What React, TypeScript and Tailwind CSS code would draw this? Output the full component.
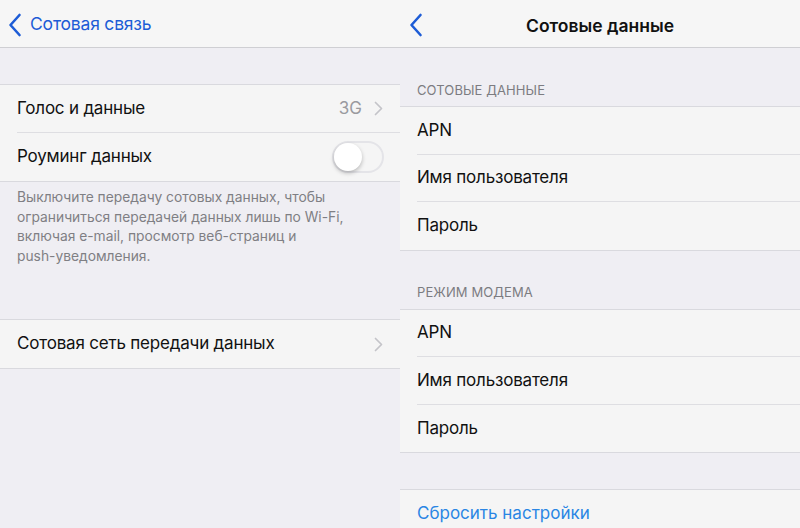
const font = { fontFamily: 'Inter, "Noto Sans", sans-serif' };

function BackChevron() {
  return (
    <svg width="14" height="24" viewBox="0 0 14 24" className="shrink-0">
      <path d="M11.5 2 L2.5 12 L11.5 22" fill="none" stroke="#1d5cd6" strokeWidth="2.6" strokeLinecap="round" strokeLinejoin="round" />
    </svg>
  );
}

function Disclosure() {
  return (
    <svg width="9" height="15" viewBox="0 0 9 15" className="shrink-0">
      <path d="M1.5 1.5 L7.5 7.5 L1.5 13.5" fill="none" stroke="#c4c4c9" strokeWidth="1.7" strokeLinecap="round" strokeLinejoin="round" />
    </svg>
  );
}

function Row({ label, value, chevron, last, tall, children }: { label: string; value?: string; chevron?: boolean; last?: boolean; tall?: boolean; children?: React.ReactNode }) {
  return (
    <div className="pl-[17px] bg-[#f5f5f5]">
      <div className={`${tall ? 'h-[48px]' : 'h-[47.5px]'} flex items-center pr-[17px] ${last ? '' : 'border-b border-[#dedee2]'}`}>
        <span className="flex-1 text-[17px] text-[#111] tracking-[-0.2px]">{label}</span>
        {value && <span className="text-[17px] text-[#9a9a9f] mr-[12px]">{value}</span>}
        {chevron && <Disclosure />}
        {children}
      </div>
    </div>
  );
}

function Group({ children }: { children: React.ReactNode }) {
  return <div className="border-y border-[#d9d9de]">{children}</div>;
}

function Header({ text }: { text: string }) {
  return (
    <div className="h-[58px] flex items-end pb-[6px] pl-[17px] text-[13px] text-[#7c7c81] tracking-[0.1px]">
      {text}
    </div>
  );
}

function Toggle() {
  return (
    <div className="w-[52px] h-[32px] rounded-full border-2 border-[#e4e4e8] bg-[#f5f5f5] -mr-[1px] relative">
      <div className="absolute left-0 top-0 w-[28px] h-[28px] rounded-full bg-white shadow-[0_2px_4px_rgba(0,0,0,0.25)]" />
    </div>
  );
}

function NavBar({ children }: { children: React.ReactNode }) {
  return (
    <div className="h-[48px] pt-[2px] bg-[#f6f6f6] border-b border-[#cfcfd3] flex items-center relative">{children}</div>
  );
}

export default function App() {
  return (
    <div className="w-[800px] h-[528px] flex bg-[#efeef3] overflow-hidden" style={font}>
      {/* Left screen */}
      <div className="w-[400px] flex flex-col [&>*]:shrink-0">
        <NavBar>
          <div className="ml-[8px] mr-[8px] flex items-center">
            <BackChevron />
          </div>
          <span className="text-[17.5px] text-[#1d5cd6] tracking-[-0.2px]">Сотовая связь</span>
        </NavBar>
        <div className="h-[36px]" />
        <Group>
          <Row label="Голос и данные" value="3G" chevron tall />
          <Row label="Роуминг данных" last tall>
            <Toggle />
          </Row>
        </Group>
        <p className="pl-[17px] pt-[6px] text-[13.8px] leading-[19.5px] text-[#7f7f84]">
          Выключите передачу сотовых данных, чтобы<br />
          ограничиться передачей данных лишь по Wi-Fi,<br />
          включая e-mail, просмотр веб-страниц и<br />
          push-уведомления.
        </p>
        <div className="h-[53px]" />
        <Group>
          <Row label="Сотовая сеть передачи данных" chevron last tall />
        </Group>
      </div>

      {/* Right screen */}
      <div className="w-[400px] flex flex-col [&>*]:shrink-0">
        <NavBar>
          <div className="ml-[9px] flex items-center">
            <BackChevron />
          </div>
          <span className="absolute inset-x-0 top-[13px] text-center text-[17.5px] font-semibold text-[#111]">Сотовые данные</span>
        </NavBar>
        <Header text="СОТОВЫЕ ДАННЫЕ" />
        <Group>
          <Row label="APN" />
          <Row label="Имя пользователя" />
          <Row label="Пароль" last />
        </Group>
        <Header text="РЕЖИМ МОДЕМА" />
        <Group>
          <Row label="APN" />
          <Row label="Имя пользователя" />
          <Row label="Пароль" last />
        </Group>
        <div className="h-[36px]" />
        <Group>
          <div className="pl-[17px] bg-[#f5f5f5] h-[48px] flex items-center text-[17px] text-[#2a86e4]">Сбросить настройки</div>
        </Group>
      </div>
    </div>
  );
}
